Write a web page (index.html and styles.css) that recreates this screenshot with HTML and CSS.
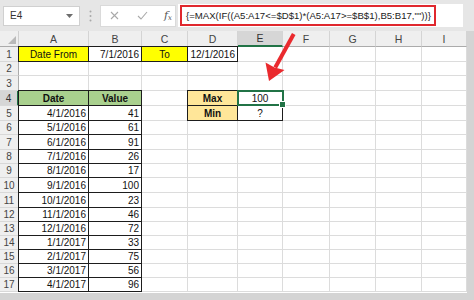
FILE: index.html
```html
<!DOCTYPE html>
<html>
<head>
<meta charset="utf-8">
<link rel="stylesheet" href="styles.css">
</head>
<body>
<div class="app">
  <div class="topbar">
    <div class="namebox">
      <span>E4</span>
      <svg class="caret" width="7" height="4" viewBox="0 0 7 4"><path d="M0 0H7L3.5 4Z" fill="#6d6d6d"/></svg>
    </div>
    <div class="grip">
      <svg width="3" height="12" viewBox="0 0 3 12"><circle cx="1.5" cy="1.5" r="1" fill="#a8a8a8"/><circle cx="1.5" cy="6" r="1" fill="#a8a8a8"/><circle cx="1.5" cy="10.5" r="1" fill="#a8a8a8"/></svg>
    </div>
    <div class="fbuttons">
      <svg width="9" height="9" viewBox="0 0 9 9"><path d="M1 1L8 8M8 1L1 8" stroke="#a9a9a9" stroke-width="1.1"/></svg>
      <svg width="11" height="9" viewBox="0 0 11 9"><path d="M1 5L4 8L10 1" stroke="#a9a9a9" stroke-width="1.1" fill="none"/></svg>
      <span class="fx">f<span class="fxs">x</span></span>
    </div>
    <div class="fbar">
      <div class="formula">{=MAX(IF((A5:A17&lt;=$D$1)*(A5:A17&gt;=$B$1),B5:B17,""))}</div>
    </div>
  </div>
  <div class="sheet">
    <div class="c corner"><svg width="8" height="8" viewBox="0 0 8 8"><path d="M8 0V8H0Z" fill="#b9b9b9"/></svg></div>
    <div class="c ch">A</div><div class="c ch">B</div><div class="c ch">C</div><div class="c ch">D</div><div class="c ch sel-h">E</div><div class="c ch">F</div><div class="c ch">G</div><div class="c ch">H</div><div class="c ch">I</div>

    <div class="c rh">1</div><div class="c m b yellow">Date From</div><div class="c r b">7/1/2016</div><div class="c m b yellow">To</div><div class="c r b">12/1/2016</div><div class="c"></div><div class="c"></div><div class="c"></div><div class="c"></div><div class="c"></div>
    <div class="c rh">2</div><div class="c"></div><div class="c"></div><div class="c"></div><div class="c"></div><div class="c"></div><div class="c"></div><div class="c"></div><div class="c"></div><div class="c"></div>
    <div class="c rh">3</div><div class="c"></div><div class="c"></div><div class="c"></div><div class="c"></div><div class="c"></div><div class="c"></div><div class="c"></div><div class="c"></div><div class="c"></div>
    <div class="c rh sel-r">4</div><div class="c m b green bold">Date</div><div class="c m b green bold">Value</div><div class="c"></div><div class="c m b orange bold">Max</div><div class="c m b sel">100</div><div class="c"></div><div class="c"></div><div class="c"></div><div class="c"></div>
    <div class="c rh">5</div><div class="c r b">4/1/2016</div><div class="c r b">41</div><div class="c"></div><div class="c m b orange bold">Min</div><div class="c m b">?</div><div class="c"></div><div class="c"></div><div class="c"></div><div class="c"></div>
    <div class="c rh">6</div><div class="c r b">5/1/2016</div><div class="c r b">61</div><div class="c"></div><div class="c"></div><div class="c"></div><div class="c"></div><div class="c"></div><div class="c"></div><div class="c"></div>
    <div class="c rh">7</div><div class="c r b">6/1/2016</div><div class="c r b">91</div><div class="c"></div><div class="c"></div><div class="c"></div><div class="c"></div><div class="c"></div><div class="c"></div><div class="c"></div>
    <div class="c rh">8</div><div class="c r b">7/1/2016</div><div class="c r b">26</div><div class="c"></div><div class="c"></div><div class="c"></div><div class="c"></div><div class="c"></div><div class="c"></div><div class="c"></div>
    <div class="c rh">9</div><div class="c r b">8/1/2016</div><div class="c r b">17</div><div class="c"></div><div class="c"></div><div class="c"></div><div class="c"></div><div class="c"></div><div class="c"></div><div class="c"></div>
    <div class="c rh">10</div><div class="c r b">9/1/2016</div><div class="c r b">100</div><div class="c"></div><div class="c"></div><div class="c"></div><div class="c"></div><div class="c"></div><div class="c"></div><div class="c"></div>
    <div class="c rh">11</div><div class="c r b">10/1/2016</div><div class="c r b">23</div><div class="c"></div><div class="c"></div><div class="c"></div><div class="c"></div><div class="c"></div><div class="c"></div><div class="c"></div>
    <div class="c rh">12</div><div class="c r b">11/1/2016</div><div class="c r b">46</div><div class="c"></div><div class="c"></div><div class="c"></div><div class="c"></div><div class="c"></div><div class="c"></div><div class="c"></div>
    <div class="c rh">13</div><div class="c r b">12/1/2016</div><div class="c r b">72</div><div class="c"></div><div class="c"></div><div class="c"></div><div class="c"></div><div class="c"></div><div class="c"></div><div class="c"></div>
    <div class="c rh">14</div><div class="c r b">1/1/2017</div><div class="c r b">33</div><div class="c"></div><div class="c"></div><div class="c"></div><div class="c"></div><div class="c"></div><div class="c"></div><div class="c"></div>
    <div class="c rh">15</div><div class="c r b">2/1/2017</div><div class="c r b">75</div><div class="c"></div><div class="c"></div><div class="c"></div><div class="c"></div><div class="c"></div><div class="c"></div><div class="c"></div>
    <div class="c rh">16</div><div class="c r b">3/1/2017</div><div class="c r b">56</div><div class="c"></div><div class="c"></div><div class="c"></div><div class="c"></div><div class="c"></div><div class="c"></div><div class="c"></div>
    <div class="c rh">17</div><div class="c r b">4/1/2017</div><div class="c r b">96</div><div class="c"></div><div class="c"></div><div class="c"></div><div class="c"></div><div class="c"></div><div class="c"></div><div class="c"></div>
  </div>
  <svg class="arrow" width="474" height="300" viewBox="0 0 474 300">
    <path d="M292 33L295.5 35L277 68.5L273.5 66.5Z" fill="#ea2a2e"/>
    <path d="M269 81L265.5 62.5L274.5 67.5L284.5 70Z" fill="#ea2a2e"/>
  </svg>
</div>
</body>
</html>
```

FILE: styles.css
```css
html, body {
  margin: 0;
  padding: 0;
}
body {
  background: #d2d2d2;
}
.app {
  position: relative;
  width: 474px;
  height: 300px;
  overflow: hidden;
  background: #d4d4d4;
  font-family: "Liberation Sans", Arial, sans-serif;
}
.topbar {
  height: 31px;
  display: flex;
  align-items: center;
  background: #e6e6e6;
  box-sizing: border-box;
  padding-left: 3px;
}
.namebox {
  width: 77px;
  height: 20px;
  box-sizing: border-box;
  background: #fff;
  border: 1px solid #d0d0d0;
  display: flex;
  align-items: center;
  justify-content: space-between;
  padding: 0 6px 0 6px;
  font-size: 10px;
  color: #333;
}
.caret {
  margin-top: 1px;
}
.grip {
  width: 20px;
  display: flex;
  justify-content: center;
  align-items: center;
}
.fbuttons {
  width: 76px;
  height: 22px;
  box-sizing: border-box;
  background: #fff;
  border: 1px solid #dadada;
  display: flex;
  align-items: center;
  padding-left: 9px;
  gap: 18px;
}
.fx {
  font-family: "DejaVu Serif", "Liberation Serif", serif;
  font-style: italic;
  font-size: 11px;
  color: #555;
  margin-left: -2px;
}
.fxs {
  font-size: 7px;
  vertical-align: -1px;
}
.fbar {
  margin-left: 2px;
  width: 285px;
  height: 23px;
  background: #fff;
  display: flex;
  align-items: center;
  padding-left: 2px;
  box-sizing: border-box;
}
.formula {
  width: 256px;
  height: 21px;
  box-sizing: border-box;
  border: 2px solid #e0282e;
  font-size: 9.6px;
  color: #222;
  display: flex;
  align-items: center;
  padding-left: 4px;
  white-space: nowrap;
}
.sheet {
  display: grid;
  grid-template-columns: 19px 70px 53px 46px 50px 45px 47px 46px 46px 45px;
  grid-template-rows: 16px 15px 14px 15px 15px 15px 14px 15px 14px 14px 15px 15px 14px 14px 14px 14px 14px 14px;
  width: 467px;
  background: #fff;
  box-shadow: 0 1px 0 #fff;
}
.c {
  box-sizing: border-box;
  border-right: 1px solid #dcdcdc;
  border-bottom: 1px solid #dcdcdc;
  background: #fff;
  font-size: 10px;
  color: #111;
  display: flex;
  align-items: center;
  padding: 0 2px;
  white-space: nowrap;
}
.r {
  justify-content: flex-end;
}
.m {
  justify-content: center;
}
.bold {
  font-weight: bold;
}
.b {
  border-right-color: #1d1d1d;
  border-bottom-color: #1d1d1d;
  box-shadow: -1px -1px 0 #1d1d1d, 0 -1px 0 #1d1d1d, -1px 0 0 #1d1d1d;
}
.yellow {
  background: #ffff00;
}
.green {
  background: #a9d08e;
}
.orange {
  background: #ffe699;
}
.corner {
  background: #efefef;
  border-right-color: #cfcfcf;
  border-bottom-color: #ababab;
  justify-content: flex-end;
  align-items: flex-end;
  padding: 0 2px 2px 0;
}
.ch {
  background: #efefef;
  border-right-color: #d4d4d4;
  border-bottom-color: #ababab;
  justify-content: center;
  color: #444;
  font-size: 10.5px;
}
.sel-h {
  background: #d6d6d6;
  border-bottom: 2px solid #217346;
  color: #333;
}
.rh {
  background: #efefef;
  border-right-color: #ababab;
  border-bottom-color: #d8d8d8;
  justify-content: center;
  color: #444;
}
.sel-r {
  background: #d6d6d6;
  border-right: 2px solid #217346;
  color: #333;
}
.sel {
  position: relative;
}
.sel::after {
  content: "";
  position: absolute;
  left: -1px;
  top: -1px;
  right: -2px;
  bottom: -1px;
  border: 2px solid #217346;
  box-sizing: border-box;
}
.sel::before {
  content: "";
  position: absolute;
  right: -4px;
  bottom: -3px;
  width: 5px;
  height: 5px;
  background: #217346;
  border: 1px solid #fff;
  z-index: 2;
}
.arrow {
  position: absolute;
  left: 0;
  top: 0;
  pointer-events: none;
}
```
